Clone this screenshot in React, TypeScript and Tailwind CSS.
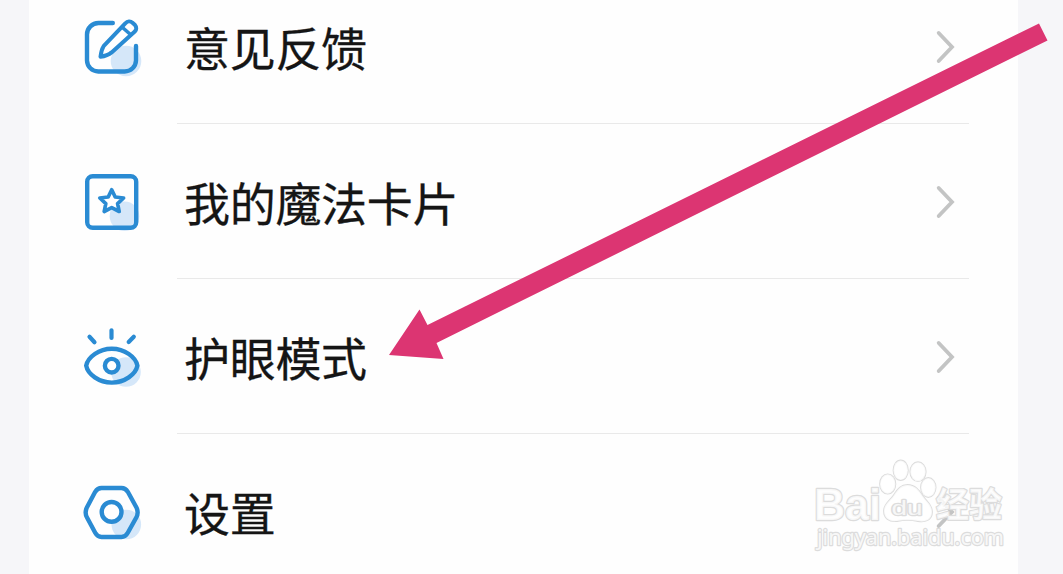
import React from 'react';

const BLUE = '#2a8bd3';
const PALE = '#d5e7f9';

interface IconFrameProps {
    children: React.ReactNode;
}

const IconFrame: React.FC<IconFrameProps> = ({ children }) => {
    return (
        <svg
            viewBox="7 6 70 70"
            className="h-[70px] w-[70px] shrink-0"
            fill="none"
            stroke={BLUE}
            strokeWidth="4.4"
            strokeLinecap="round"
            strokeLinejoin="round"
        >
            {children}
        </svg>
    );
};

const FeedbackIcon = () => (
    <IconFrame>
        <g transform="translate(0 -5)">
            <circle cx="56" cy="61" r="15.3" fill={PALE} stroke="none" />
            <path d="M42.8 23H28.5A11.5 11.5 0 0 0 17 34.5V60.5A11.3 11.3 0 0 0 28.3 71.5H54.7A11.3 11.3 0 0 0 66 60.5V46" />
            <path d="M30.5 56.8Q31.2 50 33.6 46.2L55.5 23.2A5 5 0 0 1 62.5 22.7L65 25A4.8 4.8 0 0 1 64.8 31.6L41.6 52.4Q37.500 55.800 30.500 56.800Z" fill="#fff" strokeWidth="4" />
            <path d="M52.5 27.500L60.5 34.500" strokeWidth="3.600" />
        </g>
    </IconFrame>
);

const CardIcon = () => (
    <IconFrame>
        <circle cx="54.5" cy="56.2" r="14.8" fill={PALE} stroke="none" />
        <rect x="17.200" y="16.200" width="49" height="51.600" rx="5.500" />
        <path
            d="M41.7 29.8L45.2 37L53.6 38L47.6 43.6L49.2 51.5L41.7 47.6L34.2 51.500L35.800 43.600L29.800 38L38.200 37Z"
            fill="#fff"
            strokeWidth="3.700"
        />
    </IconFrame>
);

const EyeIcon = () => (
    <IconFrame>
        <circle cx="56" cy="57" r="14.8" fill={PALE} stroke="none" />
        <path d="M16.200 50.700C17.800 42 29 33.800 41.800 33.800S65.800 42 67.400 50.700C65.800 59.400 54.600 67.600 41.800 67.600S17.800 59.400 16.200 50.700Z" />
        <circle cx="41.7" cy="50.7" r="6.800" fill="#fff" />
        <path d="M41.5 15.300V23M19.500 21.800L24.500 27.200M63.800 21.800L58.700 27" strokeWidth="4.200" />
    </IconFrame>
);

const SettingsIcon = () => (
    <IconFrame>
        <circle cx="56.300" cy="54.500" r="14.800" fill={PALE} stroke="none" />
        <path d="M31.500 18H51.500Q55.500 18 57.800 21.800L66.300 37.300Q69 42.500 66.300 47.500L57.800 62.800Q55.500 67 51.500 67H31.500Q27.500 67 25.200 62.800L17 47.500Q14.300 42.500 17 37.300L25.200 21.800Q27.500 18 31.500 18Z" />
        <circle cx="41.600" cy="41.900" r="9.900" fill="#fff" />
    </IconFrame>
);

const Chevron = () => (
    <svg
        viewBox="0 0 22 36"
        className="h-9 w-[22px]"
        fill="none"
        stroke="#c3c4c4"
        strokeWidth="3.8"
        strokeLinecap="round"
        strokeLinejoin="miter"
    >
        <path d="M2.700 5L16 19L2.700 33" />
    </svg>
);

const items = [
    { label: '意见反馈', icon: <FeedbackIcon /> },
    { label: '我的魔法卡片', icon: <CardIcon /> },
    { label: '护眼模式', icon: <EyeIcon /> },
    { label: '设置', icon: <SettingsIcon /> }
];

interface MenuRowProps {
    label: string;
    icon: React.ReactNode;
}

const MenuRow: React.FC<MenuRowProps> = ({ label, icon }) => {
    return (
        <div className="flex h-[155px] pr-[49px] pl-12">
            <div className="flex h-[154px] items-center">{icon}</div>
            <div className="ml-[30px] flex flex-1 items-center justify-between border-b border-[#e9e9e9] pr-[11px] pl-[7px]">
                <span className="text-[46px] leading-[60px] tracking-[-0.3px] whitespace-nowrap text-[#151515] [-webkit-text-stroke:0.3px_#151515]">
                    {label}
                </span>
                <Chevron />
            </div>
        </div>
    );
};

const Arrow = () => (
    <svg viewBox="0 0 1063 574" className="pointer-events-none absolute inset-0 h-[574px] w-[1063px]">
        <path d="M389 355L419.5 309.5L427.5 325L1039 23.5L1047.5 40.5L436.5 343L443.5 359Z" fill="#dc3572" />
    </svg>
);

const Watermark = () => (
    <svg
        viewBox="800 450 220 124"
        className="pointer-events-none absolute top-[450px] left-[800px] h-[124px] w-[220px] [paint-order:stroke]"
        fill="#fff"
        fillOpacity="0.8"
        stroke="#dcdcdc"
        strokeWidth="2.4"
        strokeLinejoin="round"
    >
        <g strokeWidth="1.8">
            <ellipse cx="887.7" cy="484" rx="7.7" ry="9.7" />
            <ellipse cx="900.7" cy="470.3" rx="7.2" ry="9.8" />
            <ellipse cx="918" cy="471.7" rx="7.7" ry="9.5" />
            <ellipse cx="928.3" cy="487.5" rx="7.3" ry="9.5" />
            <path d="M907.5 485C915 485 919 490 923 496.500C927 502 932 505 932 512C932 520 925 522.500 918 521C911 519.500 904 519.500 897 521C889 522 884 518 884 511C884 504 890 501 894 495C898 489 901 485 907.500 485Z" />
        </g>
        <text x="814" y="519.5" fontSize="44" fontWeight="700" textLength="67" lengthAdjust="spacingAndGlyphs" className="font-['Liberation_Sans',sans-serif]">Bai</text>
        <text x="891.5" y="514.5" fontSize="20" fontWeight="400" textLength="31" lengthAdjust="spacingAndGlyphs" className="font-['Liberation_Sans',sans-serif]">du</text>
        <text x="936" y="517" fontSize="34" fontWeight="700" textLength="66" lengthAdjust="spacingAndGlyphs" className="font-['Noto_Sans_CJK_SC',sans-serif]">经验</text>
        <text x="817" y="545" fontSize="22" fontWeight="400" textLength="187" lengthAdjust="spacingAndGlyphs" className="font-['Noto_Sans',sans-serif]">jingyan.baidu.com</text>
    </svg>
);

const App: React.FC = () => {
    return (
        <div className="relative h-[574px] w-[1063px] overflow-hidden bg-[#f6f6f9] pr-[45px] pl-[29px] font-['Noto_Sans_CJK_SC',sans-serif]">
            <div className="-mt-[31px] h-[620px] bg-[#fefefe]">
                {items.map((item) => (
                    <MenuRow key={item.label} label={item.label} icon={item.icon} />
                ))}
            </div>
            <Arrow />
            <Watermark />
        </div>
    );
};

export default App;
